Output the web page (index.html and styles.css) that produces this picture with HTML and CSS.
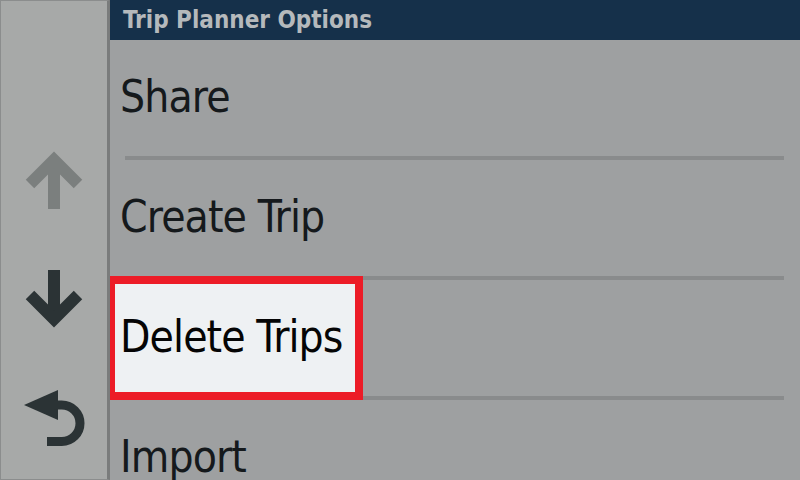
FILE: index.html
```html
<!DOCTYPE html>
<html>
<head>
<meta charset="utf-8">
<link rel="stylesheet" href="styles.css">
</head>
<body>
<div class="screen">
  <aside class="sidebar">
    <div class="nav-btn">
      <svg class="icon" viewBox="0 0 60 60" width="60" height="60">
        <path d="M30 59 V12" stroke="#7b7f7e" stroke-width="12" fill="none"/>
        <path d="M6 34 L30 10 L54 34" stroke="#7b7f7e" stroke-width="12" fill="none" stroke-linejoin="miter"/>
      </svg>
    </div>
    <div class="nav-btn">
      <svg class="icon" viewBox="0 0 60 60" width="60" height="60">
        <path d="M30 0 V48" stroke="#2b3335" stroke-width="12" fill="none"/>
        <path d="M6 25 L30 49 L54 25" stroke="#2b3335" stroke-width="12" fill="none" stroke-linejoin="miter"/>
      </svg>
    </div>
    <div class="nav-btn">
      <svg class="icon" viewBox="0 0 70 60" width="70" height="60">
        <polygon points="0,15 34,0 34,30" fill="#2b3335"/>
        <path d="M30 15 H37.75 A18.25 18.25 0 0 1 37.75 51.5 H23" stroke="#2b3335" stroke-width="9" fill="none"/>
      </svg>
    </div>
  </aside>
  <main class="main">
    <header class="title-bar">Trip Planner Options</header>
    <ul class="menu">
      <li class="menu-item"><span class="label">Share</span></li>
      <li class="menu-item"><span class="label">Create Trip</span></li>
      <li class="menu-item selected"><span class="label">Delete Trips</span></li>
      <li class="menu-item"><span class="label">Import</span></li>
    </ul>
  </main>
</div>
</body>
</html>
```
FILE: styles.css
```css
html, body {
  margin: 0;
  padding: 0;
  width: 800px;
  height: 480px;
  overflow: hidden;
  background: #9ea0a1;
}

.screen {
  display: flex;
  width: 800px;
  height: 480px;
  overflow: hidden;
  font-family: "DejaVu Sans Condensed", "DejaVu Sans", sans-serif;
  font-stretch: condensed;
}

.sidebar {
  box-sizing: border-box;
  width: 110px;
  height: 480px;
  flex: none;
  background: #a7a9a8;
  border: 1px solid #8b8d8d;
  border-right: 3px solid #7a7c7c;
  display: flex;
  flex-direction: column;
  align-items: center;
  padding-top: 149px;
  overflow: hidden;
}

.nav-btn {
  flex: none;
  height: 120px;
  display: flex;
  justify-content: center;
  align-items: flex-start;
}

.nav-btn .icon {
  display: block;
}

.nav-btn:nth-child(3) .icon {
  margin-left: 10px;
}

.main {
  flex: 1;
  display: flex;
  flex-direction: column;
  min-width: 0;
  height: 480px;
  overflow: hidden;
}

.title-bar {
  flex: none;
  height: 40px;
  box-sizing: border-box;
  background: #15304a;
  color: #b5b9bc;
  font-weight: bold;
  font-size: 24px;
  line-height: 40px;
  padding-left: 13px;
}

.menu {
  list-style: none;
  margin: 0;
  padding: 0;
}

.menu-item {
  position: relative;
  height: 116px;
  display: flex;
  align-items: center;
  padding-left: 10px;
  padding-bottom: 3px;
  box-sizing: border-box;
  color: #15191c;
  font-size: 44px;
  letter-spacing: -0.9px;
}

.menu-item + .menu-item {
  margin-top: 4px;
}

.menu-item:not(:last-child)::after {
  content: "";
  position: absolute;
  left: 15px;
  right: 16px;
  bottom: -4px;
  height: 4px;
  background: #898b8c;
}

.menu-item .label {
  position: relative;
  z-index: 2;
}

.menu-item.selected {
  color: #050505;
}

.menu-item.selected::before {
  content: "";
  position: absolute;
  left: -3px;
  top: -4px;
  width: 256px;
  height: 124px;
  box-sizing: border-box;
  border: 8px solid #ec1c27;
  background: #eef1f3;
  z-index: 1;
}
```
